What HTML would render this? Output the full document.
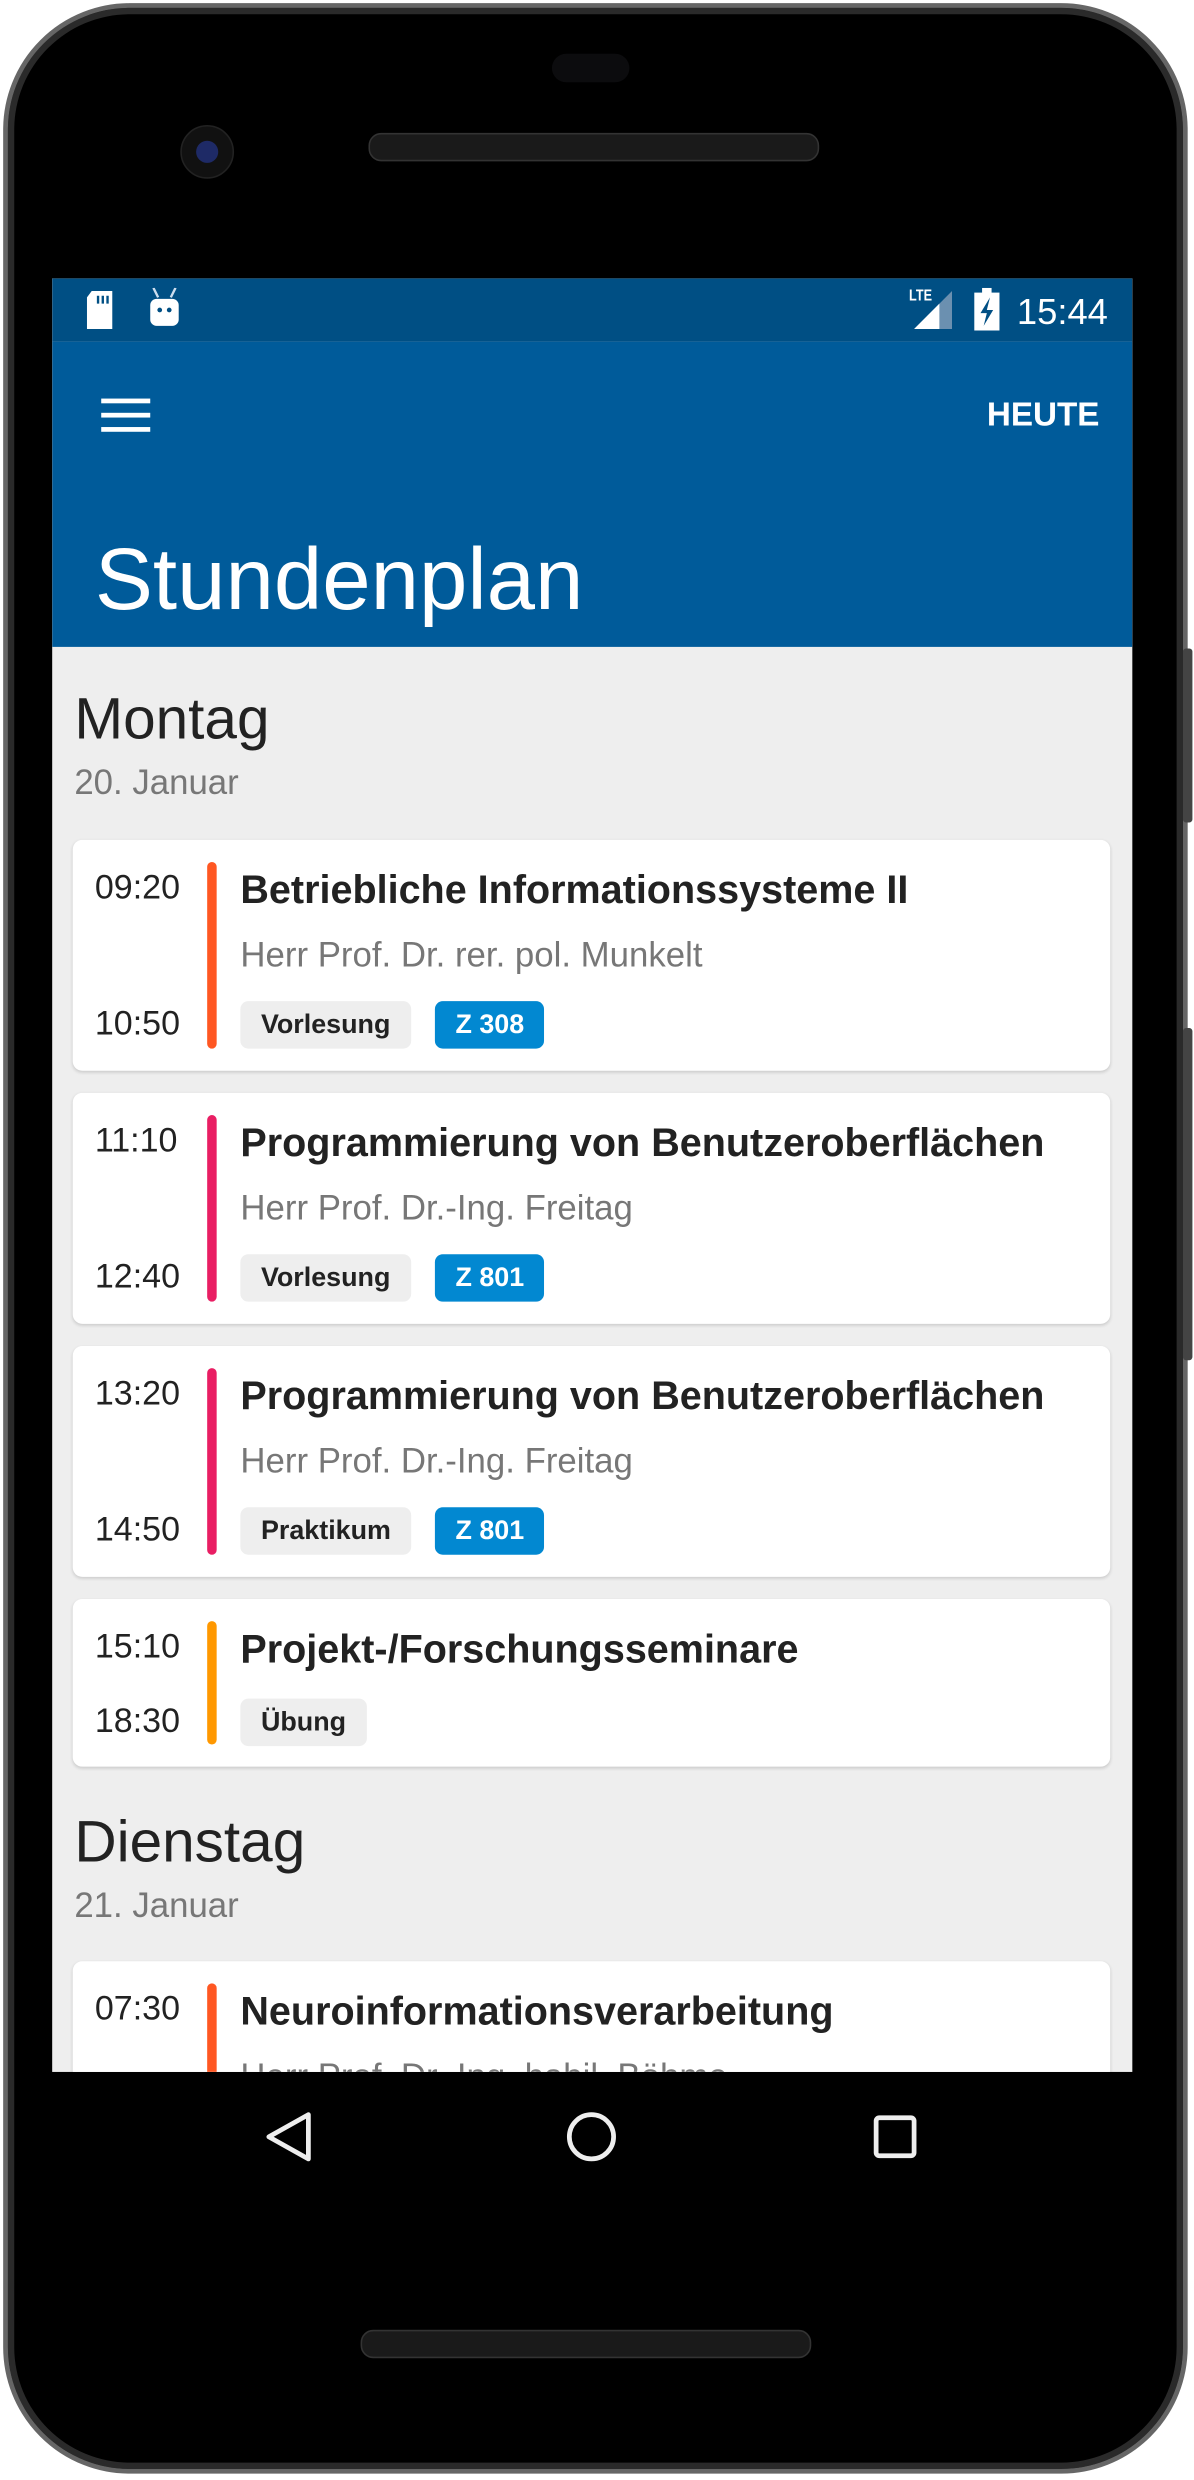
<!DOCTYPE html>
<html><head><meta charset="utf-8"><style>
html,body{margin:0;padding:0;background:#fff;width:1194px;height:2480px;overflow:hidden}
#w{width:755px;height:1568px;transform:scale(1.58146,1.58163);transform-origin:0 0;position:relative;font-family:"Liberation Sans",sans-serif}
.phone{position:absolute;left:2px;top:2px;width:749px;height:1562px;border-radius:80px;background:#000;border:3px solid #666;box-sizing:border-box;box-shadow:inset 0 0 0 4px #2a2a2a}
.scr{position:absolute;left:33px;top:176px;width:683px;height:1134px;background:#eeeeee;overflow:hidden}
.sb{height:40px;background:#004f84;position:relative;color:#fff}
.ab{height:193px;background:#005b9a;position:relative;color:#fff}
.card{position:absolute;left:13px;width:656px;background:#fff;border-radius:6px;box-shadow:0 1px 2px rgba(0,0,0,.15)}
.t{position:absolute;left:14px;font-size:21.5px;color:#222}
.bar{position:absolute;left:85px;width:6px;border-radius:3px}
.ti{position:absolute;left:106px;font-size:25px;font-weight:bold;color:#222;white-space:nowrap}
.sub{position:absolute;left:106px;font-size:22px;color:#777;white-space:nowrap}
.chip{position:absolute;height:30px;line-height:30px;border-radius:5px;font-size:17px;font-weight:bold;padding:0 13px;background:#eee;color:#222}
.chip.b{background:#0288d1;color:#fff}
.day{position:absolute;left:14px;font-size:37px;color:#222}
.date{position:absolute;left:14px;font-size:22px;color:#777}
</style></head><body><div id="w">
<div class="phone"></div>
<div style="position:absolute;left:349px;top:34px;width:49px;height:18px;border-radius:9px;background:#0c0c0e"></div>
<div style="position:absolute;left:233px;top:84px;width:283px;height:16px;border-radius:8px;background:#1a1a1a;border:1px solid #333"></div>
<div style="position:absolute;left:114px;top:79px;width:32px;height:32px;border-radius:50%;background:#111;border:1px solid #222"><div style="margin:9px;width:14px;height:14px;border-radius:50%;background:#1e2a66"></div></div>
<div style="position:absolute;left:228px;top:1473px;width:283px;height:16px;border-radius:8px;background:#1a1a1a;border:1px solid #333"></div>
<div style="position:absolute;left:748px;top:410px;width:6px;height:110px;background:#444;border-radius:2px"></div>
<div style="position:absolute;left:748px;top:650px;width:6px;height:210px;background:#444;border-radius:2px"></div>
<div class="scr">
 <div class="sb">
  <svg style="position:absolute;left:20px;top:8px" width="20" height="24"><path d="M5 0h13v24H2V4z" fill="#fff"/><path d="M9 3v5M12 3v5M15 3v5" stroke="#004f84" stroke-width="1.5"/></svg>
  <svg style="position:absolute;left:60px;top:6px" width="22" height="26"><path d="M4 0l3 6M18 0l-3 6" stroke="#cde" stroke-width="1.5"/><rect x="2" y="7" width="18" height="17" rx="4" fill="#fff"/><circle cx="8" cy="14" r="1.5" fill="#004f84"/><circle cx="14" cy="14" r="1.5" fill="#004f84"/></svg>
  <div style="position:absolute;left:540px;top:6px;font-size:10px;font-weight:bold;transform:scaleX(.8)">LTE</div>
  <svg style="position:absolute;left:545px;top:8px" width="24" height="24"><path d="M24 0v24H0z" fill="#6b90b0"/><path d="M16 8v16H0z" fill="#fff"/></svg>
  <svg style="position:absolute;left:583px;top:6px" width="16" height="27"><rect x="0" y="3" width="16" height="24" fill="#fff"/><rect x="5" y="0" width="6" height="4" fill="#fff"/><path d="M10 6l-6 10h4l-2 8 6-10h-4z" fill="#004f84"/></svg>
  <div style="position:absolute;left:610px;top:8px;font-size:23px">15:44</div>
 </div>
 <div class="ab">
  <div style="position:absolute;left:31px;top:36px;width:31px;height:3px;background:#fff;box-shadow:0 9px 0 #fff,0 18px 0 #fff"></div>
  <div style="position:absolute;left:591px;top:35px;font-size:21px;font-weight:bold">HEUTE</div>
  <div style="position:absolute;left:27px;top:118px;font-size:55px">Stundenplan</div>
 </div>
 <div class="day" style="top:258px">Montag</div>
 <div class="date" style="top:306px">20. Januar</div>

 <div class="card" style="top:355px;height:146px">
  <div class="t" style="top:18px">09:20</div><div class="t" style="top:104px">10:50</div>
  <div class="bar" style="top:14px;height:118px;background:#ff5722"></div>
  <div class="ti" style="top:18px">Betriebliche Informationssysteme II</div>
  <div class="sub" style="top:60px">Herr Prof. Dr. rer. pol. Munkelt</div>
  <div class="chip" style="left:106px;top:102px">Vorlesung</div><div class="chip b" style="left:229px;top:102px">Z 308</div>
 </div>
 <div class="card" style="top:515px;height:146px">
  <div class="t" style="top:18px">11:10</div><div class="t" style="top:104px">12:40</div>
  <div class="bar" style="top:14px;height:118px;background:#e91e63"></div>
  <div class="ti" style="top:18px">Programmierung von Benutzeroberflächen</div>
  <div class="sub" style="top:60px">Herr Prof. Dr.-Ing. Freitag</div>
  <div class="chip" style="left:106px;top:102px">Vorlesung</div><div class="chip b" style="left:229px;top:102px">Z 801</div>
 </div>
 <div class="card" style="top:675px;height:146px">
  <div class="t" style="top:18px">13:20</div><div class="t" style="top:104px">14:50</div>
  <div class="bar" style="top:14px;height:118px;background:#e91e63"></div>
  <div class="ti" style="top:18px">Programmierung von Benutzeroberflächen</div>
  <div class="sub" style="top:60px">Herr Prof. Dr.-Ing. Freitag</div>
  <div class="chip" style="left:106px;top:102px">Praktikum</div><div class="chip b" style="left:229px;top:102px">Z 801</div>
 </div>
 <div class="card" style="top:835px;height:106px">
  <div class="t" style="top:18px">15:10</div><div class="t" style="top:65px">18:30</div>
  <div class="bar" style="top:14px;height:78px;background:#ff9800"></div>
  <div class="ti" style="top:18px">Projekt-/Forschungsseminare</div>
  <div class="chip" style="left:106px;top:63px">Übung</div>
 </div>
 <div class="day" style="top:968px">Dienstag</div>
 <div class="date" style="top:1016px">21. Januar</div>
 <div class="card" style="top:1064px;height:120px">
  <div class="t" style="top:18px">07:30</div>
  <div class="bar" style="top:14px;height:118px;background:#ff5722"></div>
  <div class="ti" style="top:18px">Neuroinformationsverarbeitung</div>
  <div class="sub" style="top:60px">Herr Prof. Dr.-Ing. habil. Böhme</div>
 </div>
</div>
<svg style="position:absolute;left:160px;top:1330px" width="440" height="44" fill="none" stroke="#eee" stroke-width="3">
 <path d="M35 7L10 21l25 14z" stroke-linejoin="round"/>
 <circle cx="214" cy="21" r="14"/>
 <rect x="394" y="9" width="24" height="24" rx="2"/>
</svg>
</div></body></html>
